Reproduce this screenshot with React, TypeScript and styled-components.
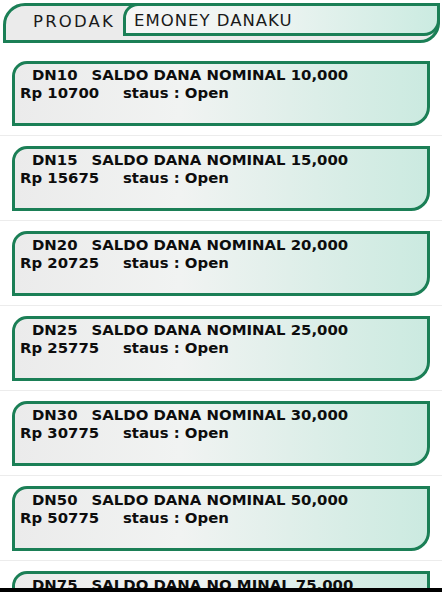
import React from 'react'
import styled, { createGlobalStyle } from 'styled-components';

const GREEN = '#1b7f56';

const GlobalStyle = createGlobalStyle`
  html, body {
    margin: 0;
    padding: 0;
    background: #ffffff;
    font-family: "DejaVu Sans", "Liberation Sans", sans-serif;
    overflow: hidden;
  }
`;

const products = [
  { code: 'DN10', name: 'SALDO DANA NOMINAL 10,000', price: '10700' },
  { code: 'DN15', name: 'SALDO DANA NOMINAL 15,000', price: '15675' },
  { code: 'DN20', name: 'SALDO DANA NOMINAL 20,000', price: '20725' },
  { code: 'DN25', name: 'SALDO DANA NOMINAL 25,000', price: '25775' },
  { code: 'DN30', name: 'SALDO DANA NOMINAL 30,000', price: '30775' },
  { code: 'DN50', name: 'SALDO DANA NOMINAL 50,000', price: '50775' },
  { code: 'DN75', name: 'SALDO DANA NO MINAL 75,000', price: '75775' },
];

const App = () => {
  return (
    <Page>
      <GlobalStyle />
      <HeaderWrap>
        <HeaderBar>
          <HeaderLabel>PRODAK</HeaderLabel>
          <HeaderTab>EMONEY DANAKU</HeaderTab>
        </HeaderBar>
      </HeaderWrap>
      <List>
        {products.map((item) => (
          <Row key={item.code}>
            <Card>
              <Title>
                <span>{item.code}</span>
                <span>{item.name}</span>
              </Title>
              <Info>
                <Price>Rp {item.price}</Price>
                <span>staus : Open</span>
              </Info>
            </Card>
          </Row>
        ))}
      </List>
      <BottomEdge />
    </Page>
  )
}

const Page = styled.div`
  width: 442px;
  height: 592px;
  overflow: hidden;
  position: relative;
`;

const HeaderWrap = styled.div`
  padding: 3px 2px 0 3px;
`;

const HeaderBar = styled.div`
  display: flex;
  align-items: flex-start;
  height: 34px;
  border: 3px solid ${GREEN};
  border-radius: 22px 0 20px 0;
  background: #ebebeb;
`;

const HeaderLabel = styled.div`
  box-sizing: border-box;
  width: 117px;
  padding: 6px 0 0 27px;
  font-size: 16.5px;
  color: #1a1a1a;
  letter-spacing: 2.2px;
`;

const HeaderTab = styled.div`
  flex: 1;
  height: 22px;
  margin: -3px -3px 0 0;
  padding: 5px 0 0 8px;
  border: 3px solid ${GREEN};
  border-radius: 15px 0 16px 0;
  background: linear-gradient(90deg, #f6f6f6 0%, #eef4f2 45%, #cbebe1 100%);
  font-size: 16.5px;
  letter-spacing: 1px;
  color: #1a1a1a;
`;

const List = styled.div`
  padding-top: 8px;
`;

const Row = styled.div`
  padding: 10px 12px 9px 12px;
  border-bottom: 1px solid #ececec;
`;

const Card = styled.div`
  height: 57px;
  border: 3px solid ${GREEN};
  border-radius: 15px 0 19px 0;
  background: linear-gradient(90deg, #ebebeb 0%, #f1f3f2 40%, #cbeae0 100%);
  padding-top: 2px;
  color: #0d0d0d;
  font-weight: bold;
  font-size: 14.9px;
`;

const Title = styled.div`
  display: flex;
  gap: 14px;
  padding-left: 17px;
  line-height: 18px;
`;

const Info = styled.div`
  display: flex;
  padding-left: 5px;
  line-height: 18px;
`;

const Price = styled.span`
  width: 103px;
`;

const BottomEdge = styled.div`
  position: absolute;
  left: 0;
  right: 0;
  bottom: 0;
  height: 4px;
  background: #000000;
`;

export default App
